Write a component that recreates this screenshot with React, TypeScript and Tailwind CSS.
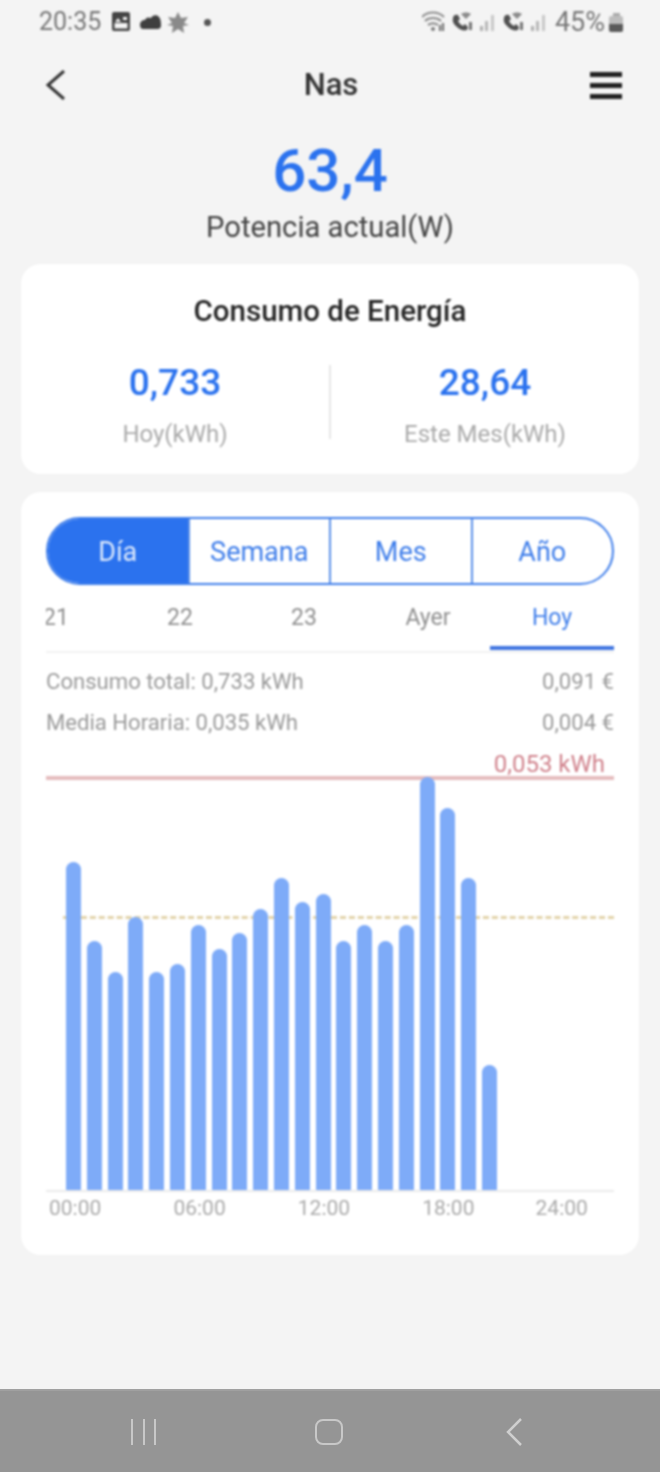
const bars = [862, 941, 972, 917, 972, 964, 925, 949, 933, 909, 878, 902, 894, 941, 925, 941, 925, 777, 808, 878, 1065];
const tabs = ['21', '22', '23', 'Ayer', 'Hoy'];
const segments = ['Día', 'Semana', 'Mes', 'Año'];
const axisLabels = ['00:00', '06:00', '12:00', '18:00', '24:00'];

function StatusIconsLeft() {
  return (
    <div className="flex items-center ml-[11px]">
      <svg width="18" height="20" viewBox="0 0 18 20">
        <rect x="0" y="0" width="18" height="19" rx="2" fill="#444" />
        <rect x="2.500" y="11" width="13" height="5.500" fill="#f4f4f4" />
        <path d="M3 10l3-4 3 4zM11 5h4v3h-4z" fill="#f4f4f4" />
      </svg>
      <svg width="21" height="16" viewBox="0 0 21 16" className="ml-[10px]">
        <path d="M0 11c0-3 2-5 5-5 1-3 4-3 6-2 1-3 6-4 8-1 2 2 2 6 2 9 0 2-2 3-3 3H3c-2 0-3-2-3-4z" fill="#3f3f3f" />
      </svg>
      <svg width="22" height="21" viewBox="0 0 22 21" className="ml-[6px]">
        <path d="M11 0l3 6 7-1-4 6 5 2-6 1 1 7-6-4-6 4 1-7-6-1 5-2-4-6 7 1z" fill="#8a8a8a" />
      </svg>
      <span className="w-[7px] h-[7px] rounded-full bg-[#555] ml-[15px]" />
    </div>
  );
}

function CallSignal() {
  return (
    <svg width="44" height="20" viewBox="0 0 44 20">
      <path d="M1 6c0-3 3-4 5-3l2 4-2 2c1 2 3 4 5 5l2-2 3 3-1 3c-3 1-7 0-10-3S0 10 1 6z" fill="#505050" />
      <path d="M9 2c3-2 7-2 10 0l-5 5z" fill="#8a8a8a" />
      <rect x="17" y="10" width="3" height="8" fill="#777" />
      <rect x="28" y="14" width="3" height="5" fill="#b0b0b0" />
      <rect x="33" y="9" width="3" height="10" fill="#b8b8b8" />
      <rect x="39" y="3" width="3" height="16" fill="#c8c8c8" />
    </svg>
  );
}

function StatusIconsRight() {
  return (
    <div className="flex items-center">
      <svg width="25" height="24" viewBox="0 0 25 24" fill="none" stroke="#8d8d8d" strokeWidth="2.200" className="mr-[5px]">
        <path d="M0 7c6-6 16-6 22 0M3 11c4-4 12-4 16 0M6 15c3-2 7-2 10 0" />
        <circle cx="11" cy="19" r="2" fill="#7d7d7d" stroke="none" />
        <path d="M21 13v8M18 15v6" stroke="#777" />
      </svg>
      <CallSignal />
      <div className="w-[7px]" />
      <CallSignal />
    </div>
  );
}

function Battery() {
  return (
    <div className="flex flex-col items-center ml-[4px]">
      <div className="w-[7px] h-[3px] bg-[#aaa]" />
      <div className="w-[14px] h-[16px] rounded-[2px] bg-[#bdbdbd] flex flex-col justify-end overflow-hidden">
        <div className="h-[8px] bg-[#5a5a5a]" />
      </div>
    </div>
  );
}

export default function App() {
  return (
    <div className="w-[660px] h-[1472px] bg-[#f4f4f4] flex flex-col font-['Roboto',sans-serif]">
      <div className="flex-1 flex flex-col blur-[0.8px]">
        {/* status bar */}
        <div className="h-[44px] pl-[39px] pr-[37px] flex items-center justify-between text-[#777]">
          <div className="flex items-center">
            <span className="text-[25px]">20:35</span>
            <StatusIconsLeft />
          </div>
          <div className="flex items-center">
            <StatusIconsRight />
            <span className="ml-[8px] text-[27px]">45%</span>
            <Battery />
          </div>
        </div>

        {/* header */}
        <div className="h-[82px] pl-[46px] pr-[38px] flex items-center justify-between">
          <svg width="26" height="30" viewBox="0 0 26 30" fill="none" stroke="#333" strokeWidth="3">
            <path d="M18 1L2 15l16 14" />
          </svg>
          <span className="text-[31px] font-medium text-[#333]">Nas</span>
          <div className="w-[32px] flex flex-col gap-[6px]">
            <div className="h-[5px] bg-[#222]" />
            <div className="h-[5px] bg-[#222]" />
            <div className="h-[5px] bg-[#222]" />
          </div>
        </div>

        <div className="flex flex-col items-center">
          <span className="text-[60px] leading-[70px] font-medium text-[#2b72ee] mt-[10px]">63,4</span>
          <span className="text-[29.200px] leading-[34px] text-[#444] mt-[4px]">Potencia actual(W)</span>
        </div>

        {/* energy card */}
        <div className="mx-[21px] mt-[20px] h-[210px] bg-white rounded-[20px] flex flex-col items-center">
          <span className="text-[29.500px] leading-[32px] font-medium text-[#262626] mt-[31px]">Consumo de Energía</span>
          <div className="w-full flex items-center mt-[35px]">
            <div className="flex-1 flex flex-col items-center">
              <span className="text-[37px] leading-[42px] font-medium text-[#2b72ee]">0,733</span>
              <span className="text-[24px] leading-[28px] text-[#aaa] mt-[16px]">Hoy(kWh)</span>
            </div>
            <div className="w-[2px] h-[74px] bg-[#e6e6e6] mb-[7px]" />
            <div className="flex-1 flex flex-col items-center">
              <span className="text-[37px] leading-[42px] font-medium text-[#2b72ee]">28,64</span>
              <span className="text-[24px] leading-[28px] text-[#aaa] mt-[16px]">Este Mes(kWh)</span>
            </div>
          </div>
        </div>

        {/* history card */}
        <div className="mx-[21px] mt-[18px] h-[763px] bg-white rounded-[20px] px-[25px] pt-[25px] flex flex-col">
          <div className="h-[68px] flex rounded-full border-2 border-[#3f7eea] overflow-hidden">
            {segments.map((s, i) => (
              <div
                key={s}
                className={
                  i === 0
                    ? 'flex-1 flex items-center justify-center pt-[2px] bg-[#2b72ee] text-[#dbe8fc] text-[27px]'
                    : 'flex-1 flex items-center justify-center pt-[2px] border-l-2 border-[#5b8fe8] text-[#3f7eea] text-[27px]'
                }
              >
                {s}
              </div>
            ))}
          </div>

          <div className="h-[68px] flex justify-end overflow-hidden border-b-2 border-[#f2f2f2]">
            {tabs.map((t) => (
              <div
                key={t}
                className={
                  t === 'Hoy'
                    ? 'w-[124px] shrink-0 pt-[19px] text-center text-[23px] leading-[28px] text-[#3f7eea] border-b-4 border-[#3f74e0] h-[65px]'
                    : 'w-[124px] shrink-0 pt-[19px] text-center text-[23px] leading-[28px] text-[#8f8f8f]'
                }
              >
                {t}
              </div>
            ))}
          </div>

          <div className="flex justify-between text-[22.100px] leading-[24px] text-[#9a9a9a] mt-[16px]">
            <span>Consumo total: 0,733 kWh</span>
            <span>0,091 €</span>
          </div>
          <div className="flex justify-between text-[22.100px] leading-[24px] text-[#9a9a9a] mt-[17px]">
            <span>Media Horaria: 0,035 kWh</span>
            <span>0,004 €</span>
          </div>

          {/* chart */}
          <div className="relative h-[445px] mt-[13px] border-b-2 border-[#ebebeb]">
            <span className="absolute right-[9px] top-[3px] text-[24px] leading-[28px] text-[#d0828c]">0,053 kWh</span>
            <div className="absolute left-0 right-0 top-[29px] h-[4px] bg-[#e5bcbe]" />
            <div className="absolute left-[17px] right-0 top-[169px] border-t-[3px] border-dashed border-[#e2d3aa]" />
            <div className="absolute inset-0 pl-[20px] flex items-end gap-[5.800px]">
              {bars.map((top, i) => (
                <div
                  key={i}
                  className="w-[15px] rounded-t-[7.500px] bg-[#7eabf8]"
                  style={{ height: 1190 - top }}
                />
              ))}
            </div>
          </div>

          <div className="h-[30px] pt-[1px] flex text-[21px] leading-[30px] text-[#aaa] pl-[3px]">
            {axisLabels.map((l) => (
              <span key={l} className={l === '24:00' ? '-ml-[11px]' : 'w-[124.400px] shrink-0'}>
                {l}
              </span>
            ))}
          </div>
        </div>
      </div>

      {/* nav bar */}
      <div className="h-[83px] shrink-0 bg-[#959595] border-t-2 border-[#a0a0a0] pl-[131px] flex items-center">
        <div className="w-[25px] flex justify-between blur-[0.5px]">
          <div className="w-[2px] h-[26px] bg-[#c8c8c8]" />
          <div className="w-[2px] h-[26px] bg-[#c8c8c8]" />
          <div className="w-[2px] h-[26px] bg-[#c8c8c8]" />
        </div>
        <div className="w-[28px] h-[26px] rounded-[8px] border-2 border-[#c8c8c8] ml-[159px] blur-[0.5px]" />
        <svg width="16" height="28" viewBox="0 0 16 28" fill="none" stroke="#cfcfcf" strokeWidth="2.500" className="ml-[163px] blur-[0.5px]">
          <path d="M15 1L2 14l13 13" />
        </svg>
      </div>
    </div>
  );
}
